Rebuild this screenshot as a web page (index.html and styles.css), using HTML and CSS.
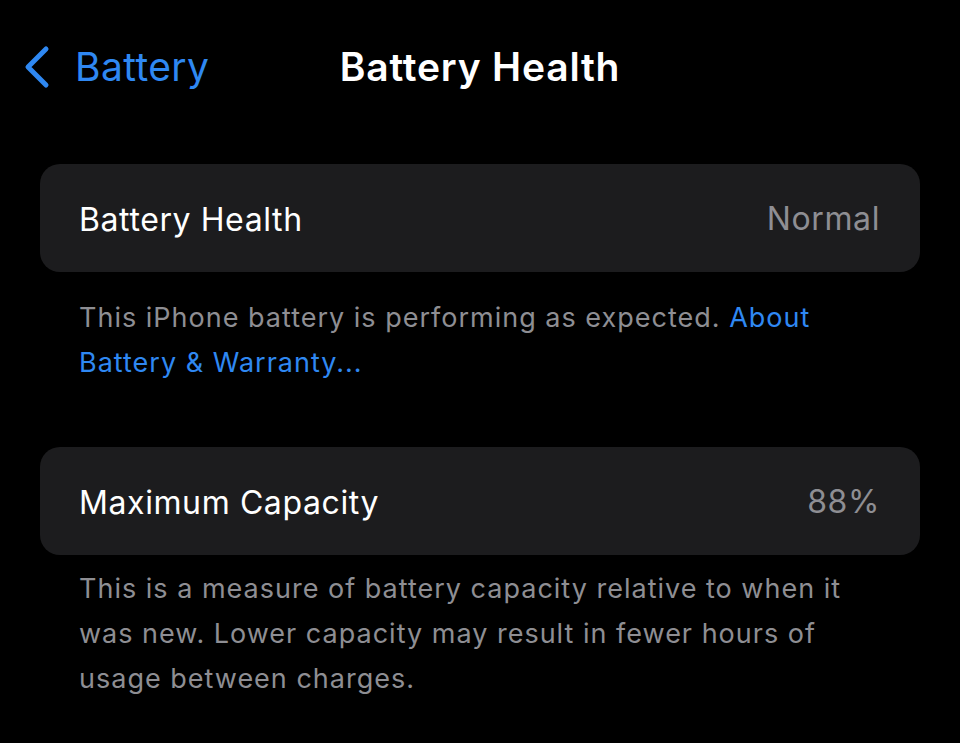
FILE: index.html
```html
<!DOCTYPE html>
<html lang="en">
<head>
    <meta charset="UTF-8">
    <meta name="viewport" content="width=device-width, initial-scale=1.0">
    <link rel="stylesheet" href="styles.css">
    <title>Battery Health</title>
</head>
<body>

    <div class="navbar">
        <a class="back" href="#">
            <svg class="chevron" width="30" height="44" viewBox="0 0 30 44">
                <path d="M25 4 L7 22 L25 40" fill="none" stroke="currentColor" stroke-width="5" stroke-linecap="round" stroke-linejoin="round"/>
            </svg>
            <span>Battery</span>
        </a>
        <div class="title">Battery Health</div>
    </div>

    <div class="section first">
        <div class="cell">
            <span class="label">Battery Health</span>
            <span class="value">Normal</span>
        </div>
        <p class="footer">This iPhone battery is performing as expected. <a href="#">About Battery &amp; Warranty...</a></p>
    </div>

    <div class="section second">
        <div class="cell">
            <span class="label">Maximum Capacity</span>
            <span class="value">88%</span>
        </div>
        <p class="footer">This is a measure of battery capacity relative to when it was new. Lower capacity may result in fewer hours of usage between charges.</p>
    </div>

</body>
</html>
```

FILE: styles.css
```css
:root {
    --blue: #2f88f2;
    --card: #1c1c1e;
    --grey: #8e8e93;
}

body {
    margin: 0;
    background: #000;
    color: #fff;
    font-family: Inter, "Noto Sans", sans-serif;
}

.navbar {
    position: relative;
    height: 134px;
    display: flex;
    align-items: flex-start;
    justify-content: center;
}

.back {
    position: absolute;
    left: 21px;
    top: 45px;
    display: flex;
    align-items: center;
    gap: 24px;
    color: var(--blue);
    text-decoration: none;
    font-size: 39px;
    line-height: 44px;
    letter-spacing: 0.4px;
}

.chevron {
    display: block;
}

.title {
    margin-top: 44px;
    font-size: 39px;
    line-height: 46px;
    font-weight: 600;
    letter-spacing: 0.8px;
}

.section {
    padding: 0 40px;
}

.section.first {
    margin-top: 30px;
}

.section.second {
    margin-top: 62px;
}

.cell {
    height: 108px;
    background: var(--card);
    border-radius: 20px;
    padding: 0 40px 0 39px;
    display: flex;
    align-items: center;
    justify-content: space-between;
    font-size: 32px;
    letter-spacing: 0.6px;
}

.label {
    margin-top: 2px;
}

.value {
    color: var(--grey);
}

.footer {
    margin: 23px 0 0;
    padding: 0 39px;
    font-size: 27px;
    line-height: 45px;
    letter-spacing: 1px;
    color: var(--grey);
}

.second .footer {
    margin-top: 11px;
}

.footer a {
    color: var(--blue);
    text-decoration: none;
}
```
